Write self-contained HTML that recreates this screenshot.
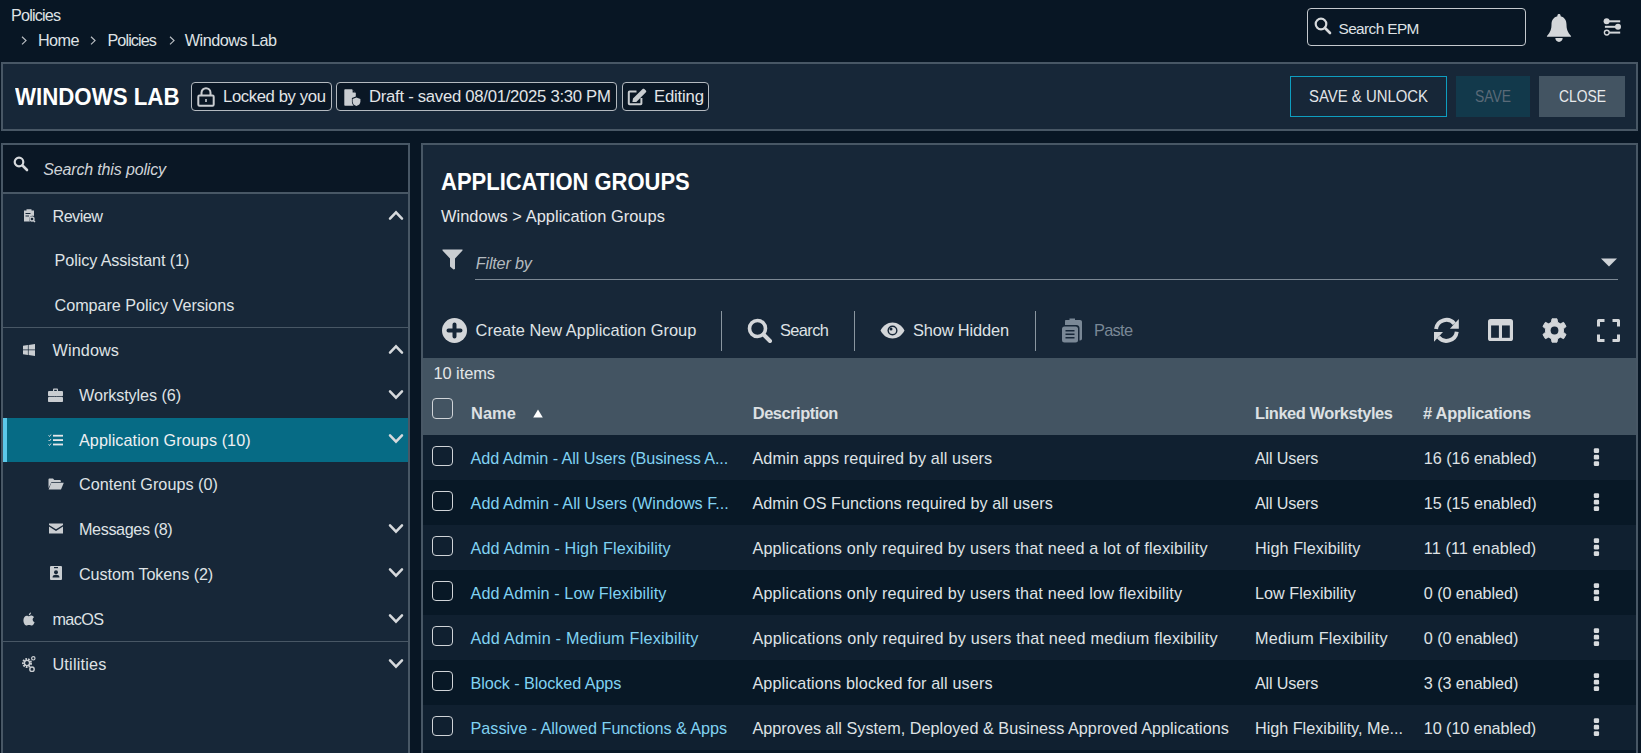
<!DOCTYPE html>
<html><head><meta charset="utf-8"><style>
html,body{margin:0;padding:0;}
body{width:1641px;height:753px;overflow:hidden;background:#081624;position:relative;font-family:"Liberation Sans",sans-serif;}
.a{position:absolute;box-sizing:content-box;}
.t{position:absolute;white-space:nowrap;}
svg.a{overflow:visible}
</style></head><body>
<div class="t" style="left:11.00px;top:7.29px;font-size:16.2px;line-height:16.2px;color:#dfe2e5;font-weight:400;font-style:normal;letter-spacing:-0.829px;">Policies</div>
<svg class="a" style="left:20.5px;top:36px" width="7" height="10" viewBox="0 0 7 10"><path d="M1 0.8 L5 4.6 L1 8.4" fill="none" stroke="#b9bec3" stroke-width="1.2"/></svg>
<div class="t" style="left:38.00px;top:32.09px;font-size:16.2px;line-height:16.2px;color:#dfe2e5;font-weight:400;font-style:normal;letter-spacing:-0.567px;">Home</div>
<svg class="a" style="left:89.5px;top:36px" width="7" height="10" viewBox="0 0 7 10"><path d="M1 0.8 L5 4.6 L1 8.4" fill="none" stroke="#b9bec3" stroke-width="1.2"/></svg>
<div class="t" style="left:107.40px;top:32.09px;font-size:16.2px;line-height:16.2px;color:#dfe2e5;font-weight:400;font-style:normal;letter-spacing:-0.886px;">Policies</div>
<svg class="a" style="left:168.5px;top:36px" width="7" height="10" viewBox="0 0 7 10"><path d="M1 0.8 L5 4.6 L1 8.4" fill="none" stroke="#b9bec3" stroke-width="1.2"/></svg>
<div class="t" style="left:184.80px;top:32.09px;font-size:16.2px;line-height:16.2px;color:#dfe2e5;font-weight:400;font-style:normal;letter-spacing:-0.490px;">Windows Lab</div>
<div class="a" style="left:1307px;top:8px;width:217px;height:36px;border:1px solid #c4c9ce;border-radius:4px;background:#081624"></div>
<svg class="a" style="left:1314px;top:17px" width="18" height="18" viewBox="0 0 18 18"><circle cx="7" cy="7" r="5.3" fill="none" stroke="#d6d9dc" stroke-width="2.2"/><path d="M11 11 L16 16" stroke="#d6d9dc" stroke-width="2.6" stroke-linecap="round"/></svg>
<div class="t" style="left:1338.50px;top:21.06px;font-size:15.4px;line-height:15.4px;color:#dfe2e5;font-weight:400;font-style:normal;letter-spacing:-0.611px;">Search EPM</div>
<svg class="a" style="left:1546px;top:13px" width="26" height="30" viewBox="0 0 26 30"><path d="M13 1 C14 1 14.6 1.7 14.6 2.5 L14.6 3.3 C18.5 4.2 20.5 7.5 20.5 11.5 C20.5 16 21.5 19 25 23 C25.3 23.4 25 23.8 24.5 23.8 L1.5 23.8 C1 23.8 0.7 23.4 1 23 C4.5 19 5.5 16 5.5 11.5 C5.5 7.5 7.5 4.2 11.4 3.3 L11.4 2.5 C11.4 1.7 12 1 13 1Z" fill="#d3d6d9"/><path d="M9.3 25 L16.7 25 C16.7 27.3 15 28.9 13 28.9 C11 28.9 9.3 27.3 9.3 25Z" fill="#d3d6d9"/></svg>
<svg class="a" style="left:1602px;top:17px" width="20" height="19" viewBox="0 0 20 19"><circle cx="4.6" cy="4.3" r="3" fill="#d3d6d9"/><rect x="4.6" y="3.3" width="13.6" height="2" fill="#d3d6d9"/><circle cx="16" cy="9.8" r="3" fill="#d3d6d9"/><rect x="2.9" y="8.8" width="13" height="2" fill="#d3d6d9"/><circle cx="4.8" cy="15.6" r="2.4" fill="none" stroke="#d3d6d9" stroke-width="1.4"/><rect x="7.2" y="14.6" width="11" height="2" fill="#d3d6d9"/></svg>
<div class="a" style="left:1px;top:62px;width:1633px;height:65px;border:2px solid #485765;background:#172738"></div>
<div class="t" style="left:14.50px;top:84.37px;font-size:24px;line-height:24px;color:#ffffff;font-weight:700;font-style:normal;letter-spacing:0.000px;transform-origin:0 0;transform:scale(0.9278,1.03);">WINDOWS LAB</div>
<div class="a" style="left:191px;top:82px;width:139px;height:27px;border:1px solid #b4bac0;border-radius:4px;background:#0a1725"></div><svg class="a" style="left:197px;top:87px" width="18" height="20" viewBox="0 0 18 20"><path d="M4.5 8.5 L4.5 5.8 C4.5 3.2 6.5 1.2 9 1.2 C11.5 1.2 13.5 3.2 13.5 5.8 L13.5 8.5" fill="none" stroke="#c9cdd1" stroke-width="2"/><rect x="1.3" y="8.6" width="15.4" height="10.2" rx="1.2" fill="none" stroke="#c9cdd1" stroke-width="2"/><rect x="8.2" y="12" width="1.6" height="3" fill="#c9cdd1"/></svg><div class="t" style="left:223.00px;top:89.16px;font-size:16.7px;line-height:16.7px;color:#e2e5e8;font-weight:400;font-style:normal;letter-spacing:-0.392px;">Locked by you</div>
<div class="a" style="left:336px;top:82px;width:279px;height:27px;border:1px solid #b4bac0;border-radius:4px;background:#0a1725"></div><svg class="a" style="left:344px;top:89px" width="17" height="17" viewBox="0 0 17 17"><path d="M0.3 1.2 C0.3 0.6 0.7 0.2 1.3 0.2 L8 0.2 L11.8 4 L11.8 7.6 L7.9 9.1 L7.9 12.6 C7.9 14.3 8.6 15.7 9.6 16.7 L1.3 16.7 C0.7 16.7 0.3 16.3 0.3 15.7 Z" fill="#c9cdd1"/><path d="M8.6 0.6 L11.4 3.4 L8.6 3.4 Z" fill="#0a1725"/><path d="M12.4 8.4 L16.4 9.9 L16.4 12.4 C16.4 14.7 14.7 16.3 12.4 16.9 C10.1 16.3 8.6 14.7 8.6 12.4 L8.6 9.9 Z" fill="#c9cdd1"/></svg><div class="t" style="left:369.00px;top:89.16px;font-size:16.7px;line-height:16.7px;color:#e2e5e8;font-weight:400;font-style:normal;letter-spacing:-0.277px;">Draft - saved 08/01/2025 3:30 PM</div>
<div class="a" style="left:622px;top:82px;width:85px;height:27px;border:1px solid #b4bac0;border-radius:4px;background:#0a1725"></div><svg class="a" style="left:627px;top:88px" width="20" height="18" viewBox="0 0 20 18"><path d="M9.5 3.6 L2.6 3.6 C2.1 3.6 1.8 3.9 1.8 4.4 L1.8 15.4 C1.8 15.9 2.1 16.2 2.6 16.2 L13.6 16.2 C14.1 16.2 14.4 15.9 14.4 15.4 L14.4 10" fill="none" stroke="#c9cdd1" stroke-width="2"/><path d="M5.4 14 L6 10.6 L15.6 1 C16.1 0.5 16.8 0.5 17.3 1 L18.9 2.6 C19.4 3.1 19.4 3.8 18.9 4.3 L9.3 13.9 Z" fill="#c9cdd1"/></svg><div class="t" style="left:654.00px;top:89.16px;font-size:16.7px;line-height:16.7px;color:#e2e5e8;font-weight:400;font-style:normal;letter-spacing:-0.183px;">Editing</div>
<div class="a" style="left:1290px;top:76px;width:155px;height:39px;border:1px solid #0e9ec0;"></div>
<div class="t" style="left:1309.00px;top:87.61px;font-size:17px;line-height:17px;color:#e2e5e8;font-weight:400;font-style:normal;letter-spacing:0.000px;transform-origin:0 0;transform:scale(0.8769,1.0);">SAVE &amp; UNLOCK</div>
<div class="a" style="left:1456px;top:76px;width:74px;height:41px;background:#12394b"></div>
<div class="t" style="left:1475.00px;top:87.61px;font-size:17px;line-height:17px;color:#5a6a78;font-weight:400;font-style:normal;letter-spacing:0.000px;transform-origin:0 0;transform:scale(0.8163,1.0);">SAVE</div>
<div class="a" style="left:1539px;top:76px;width:86px;height:41px;background:#435462"></div>
<div class="t" style="left:1558.60px;top:87.61px;font-size:17px;line-height:17px;color:#e8eaec;font-weight:400;font-style:normal;letter-spacing:0.000px;transform-origin:0 0;transform:scale(0.8142,1.0);">CLOSE</div>
<div class="a" style="left:1px;top:143px;width:405px;height:700px;border:2px solid #485765;background:#172738"></div>
<div class="a" style="left:3px;top:145px;width:405px;height:47px;background:#0a1725;border-bottom:2px solid #485765"></div>
<svg class="a" style="left:13px;top:156px" width="16" height="16" viewBox="0 0 16 16"><circle cx="6" cy="6" r="4.3" fill="none" stroke="#d6d9dc" stroke-width="2.2"/><path d="M9.5 9.5 L14 14" stroke="#d6d9dc" stroke-width="2.6" stroke-linecap="round"/></svg>
<div class="t" style="left:43.20px;top:161.66px;font-size:16px;line-height:16px;color:#d0d4d8;font-weight:400;font-style:italic;letter-spacing:-0.147px;">Search this policy</div>
<div class="a" style="left:3px;top:327px;width:405px;height:1px;background:#485765"></div>
<div class="a" style="left:3px;top:641px;width:405px;height:1px;background:#485765"></div>
<div class="a" style="left:3px;top:418px;width:405px;height:44px;background:#066b85"></div>
<div class="a" style="left:3px;top:418px;width:4px;height:44px;background:#5cc8ea"></div>
<svg class="a" style="left:23px;top:208px" width="12" height="15" viewBox="0 0 12 15"><path d="M1 2.5 L3.5 2.5 L3.5 1.3 L8.5 1.3 L8.5 2.5 L11 2.5 L11 8 C9.8 7.6 8 7.8 7 9 C6 10.2 6 12.2 7 13.6 L1 13.6 Z" fill="#c9cdd1"/><circle cx="9" cy="11" r="2" fill="none" stroke="#c9cdd1" stroke-width="1.3"/><path d="M10.4 12.4 L12 14" stroke="#c9cdd1" stroke-width="1.4"/><rect x="2.5" y="5" width="5" height="1" fill="#172738"/><rect x="2.5" y="7.5" width="3.5" height="1" fill="#172738"/></svg>
<div class="t" style="left:52.50px;top:207.79px;font-size:16.2px;line-height:16.2px;color:#dfe2e5;font-weight:400;font-style:normal;letter-spacing:-0.540px;">Review</div>
<svg class="a" style="left:388px;top:210.0px" width="16" height="11" viewBox="0 0 16 11"><path d="M2 8.7 L8 2.3 L14 8.7" fill="none" stroke="#d6d9dc" stroke-width="2.5" stroke-linecap="round"/></svg>

<div class="t" style="left:54.60px;top:252.19px;font-size:16.2px;line-height:16.2px;color:#dfe2e5;font-weight:400;font-style:normal;letter-spacing:-0.105px;">Policy Assistant (1)</div>

<div class="t" style="left:54.60px;top:296.99px;font-size:16.2px;line-height:16.2px;color:#dfe2e5;font-weight:400;font-style:normal;letter-spacing:-0.050px;">Compare Policy Versions</div>
<svg class="a" style="left:23px;top:344px" width="12" height="12" viewBox="0 0 12 12"><path d="M0 1.7 L4.9 1 L4.9 5.6 L0 5.6Z M5.6 0.9 L12 0 L12 5.6 L5.6 5.6Z M0 6.3 L4.9 6.3 L4.9 11 L0 10.3Z M5.6 6.3 L12 6.3 L12 12 L5.6 11.1Z" fill="#c9cdd1"/></svg>
<div class="t" style="left:52.50px;top:341.99px;font-size:16.2px;line-height:16.2px;color:#dfe2e5;font-weight:400;font-style:normal;letter-spacing:0.133px;">Windows</div>
<svg class="a" style="left:388px;top:344.2px" width="16" height="11" viewBox="0 0 16 11"><path d="M2 8.7 L8 2.3 L14 8.7" fill="none" stroke="#d6d9dc" stroke-width="2.5" stroke-linecap="round"/></svg>
<svg class="a" style="left:48px;top:388px" width="15" height="14" viewBox="0 0 15 14"><path d="M5 3 L5 1.6 C5 1 5.5 0.5 6 0.5 L9 0.5 C9.5 0.5 10 1 10 1.6 L10 3 L8.8 3 L8.8 1.8 L6.2 1.8 L6.2 3 Z" fill="#c9cdd1"/><rect x="0" y="3" width="15" height="5.2" rx="1" fill="#c9cdd1"/><rect x="0" y="9" width="15" height="5" rx="0.8" fill="#c9cdd1"/><rect x="6" y="7.2" width="3" height="2.6" fill="#c9cdd1"/><rect x="6.2" y="8.2" width="2.6" height="0.8" fill="#172738"/></svg>
<div class="t" style="left:79.10px;top:387.29px;font-size:16.2px;line-height:16.2px;color:#dfe2e5;font-weight:400;font-style:normal;letter-spacing:-0.092px;">Workstyles (6)</div>
<svg class="a" style="left:388px;top:389px" width="16" height="11" viewBox="0 0 16 11"><path d="M2 2.3 L8 8.7 L14 2.3" fill="none" stroke="#d6d9dc" stroke-width="2.5" stroke-linecap="round"/></svg>
<svg class="a" style="left:48px;top:434px" width="15" height="12" viewBox="0 0 15 12"><path d="M0.5 1.5 L1.5 2.5 L3 0.5 M0.5 6 L1.5 7 L3 5 M0.5 10.5 L1.5 11.5 L3 9.5" fill="none" stroke="#d6d9dc" stroke-width="1"/><rect x="5" y="0.8" width="10" height="1.8" fill="#e6e8ea"/><rect x="5" y="5.2" width="10" height="1.8" fill="#e6e8ea"/><rect x="5" y="9.6" width="10" height="1.8" fill="#e6e8ea"/></svg>
<div class="t" style="left:79.00px;top:431.69px;font-size:16.2px;line-height:16.2px;color:#eef0f2;font-weight:400;font-style:normal;letter-spacing:0.073px;">Application Groups (10)</div>
<svg class="a" style="left:388px;top:433.4px" width="16" height="11" viewBox="0 0 16 11"><path d="M2 2.3 L8 8.7 L14 2.3" fill="none" stroke="#d6d9dc" stroke-width="2.5" stroke-linecap="round"/></svg>
<svg class="a" style="left:48px;top:478px" width="16" height="12" viewBox="0 0 16 12"><path d="M0.5 10 L0.5 1.3 C0.5 0.8 0.9 0.5 1.3 0.5 L5 0.5 L6.3 2 L12 2 C12.4 2 12.8 2.4 12.8 2.8 L12.8 4 L3.5 4 Z" fill="#c9cdd1"/><path d="M3.3 4.8 L15.8 4.8 L13 11.5 L0.6 11.5 Z" fill="#c9cdd1"/></svg>
<div class="t" style="left:79.00px;top:476.29px;font-size:16.2px;line-height:16.2px;color:#dfe2e5;font-weight:400;font-style:normal;letter-spacing:0.018px;">Content Groups (0)</div>
<svg class="a" style="left:49px;top:523px" width="14" height="11" viewBox="0 0 14 11"><path d="M0 0.5 L14 0.5 L14 2 L7 6.3 L0 2Z" fill="#c9cdd1"/><path d="M0 3.6 L7 8 L14 3.6 L14 10.5 L0 10.5Z" fill="#c9cdd1"/></svg>
<div class="t" style="left:79.00px;top:521.39px;font-size:16.2px;line-height:16.2px;color:#dfe2e5;font-weight:400;font-style:normal;letter-spacing:-0.391px;">Messages (8)</div>
<svg class="a" style="left:388px;top:523.1px" width="16" height="11" viewBox="0 0 16 11"><path d="M2 2.3 L8 8.7 L14 2.3" fill="none" stroke="#d6d9dc" stroke-width="2.5" stroke-linecap="round"/></svg>
<svg class="a" style="left:50px;top:566px" width="12" height="14" viewBox="0 0 12 14"><rect x="0" y="0" width="12" height="14" rx="1" fill="#c9cdd1"/><rect x="4" y="1" width="4" height="1.2" fill="#172738"/><circle cx="6" cy="6.3" r="2" fill="#172738"/><path d="M2.5 11.5 C2.5 9.5 4 8.8 6 8.8 C8 8.8 9.5 9.5 9.5 11.5Z" fill="#172738"/></svg>
<div class="t" style="left:79.00px;top:565.69px;font-size:16.2px;line-height:16.2px;color:#dfe2e5;font-weight:400;font-style:normal;letter-spacing:-0.081px;">Custom Tokens (2)</div>
<svg class="a" style="left:388px;top:567.4px" width="16" height="11" viewBox="0 0 16 11"><path d="M2 2.3 L8 8.7 L14 2.3" fill="none" stroke="#d6d9dc" stroke-width="2.5" stroke-linecap="round"/></svg>
<svg class="a" style="left:23px;top:612px" width="12" height="14" viewBox="0 0 12 14"><path d="M8 0.5 C8 1.8 7.2 3 5.8 3.2 C5.8 1.9 6.6 0.8 8 0.5Z" fill="#c9cdd1"/><path d="M6 4.3 C7 3.6 8.2 3.4 9.2 3.8 C10 4.1 10.6 4.6 11 5.3 C9.6 6.1 9.2 7.9 10.2 9.2 C10.6 9.7 11 10 11.6 10.2 C11.1 11.6 10 13.5 8.8 13.5 C7.8 13.5 7.4 12.9 6 12.9 C4.6 12.9 4.2 13.5 3.2 13.5 C1.8 13.5 0.4 11 0.4 8.3 C0.4 5.5 2.1 3.7 3.8 3.7 C4.8 3.7 5.3 4.3 6 4.3Z" fill="#c9cdd1"/></svg>
<div class="t" style="left:52.40px;top:611.09px;font-size:16.2px;line-height:16.2px;color:#dfe2e5;font-weight:400;font-style:normal;letter-spacing:-0.600px;">macOS</div>
<svg class="a" style="left:388px;top:612.8px" width="16" height="11" viewBox="0 0 16 11"><path d="M2 2.3 L8 8.7 L14 2.3" fill="none" stroke="#d6d9dc" stroke-width="2.5" stroke-linecap="round"/></svg>
<svg class="a" style="left:21px;top:656px" width="15" height="16" viewBox="0 0 15 16"><circle cx="6" cy="7" r="3.6" fill="none" stroke="#c9cdd1" stroke-width="2.8" stroke-dasharray="1.6 0.9"/><circle cx="6" cy="7" r="2.6" fill="none" stroke="#c9cdd1" stroke-width="1.4"/><circle cx="12.3" cy="2.3" r="1.7" fill="none" stroke="#c9cdd1" stroke-width="1.2"/><circle cx="11" cy="13.2" r="2.2" fill="none" stroke="#c9cdd1" stroke-width="1.4"/></svg>
<div class="t" style="left:52.40px;top:656.09px;font-size:16.2px;line-height:16.2px;color:#dfe2e5;font-weight:400;font-style:normal;letter-spacing:0.237px;">Utilities</div>
<svg class="a" style="left:388px;top:657.8px" width="16" height="11" viewBox="0 0 16 11"><path d="M2 2.3 L8 8.7 L14 2.3" fill="none" stroke="#d6d9dc" stroke-width="2.5" stroke-linecap="round"/></svg>
<div class="a" style="left:421px;top:143px;width:1213px;height:700px;border:2px solid #485765;background:#172738"></div>
<div class="t" style="left:441.20px;top:169.47px;font-size:24px;line-height:24px;color:#ffffff;font-weight:700;font-style:normal;letter-spacing:0.000px;transform-origin:0 0;transform:scale(0.9161,1.03);">APPLICATION GROUPS</div>
<div class="t" style="left:441.00px;top:207.82px;font-size:16.4px;line-height:16.4px;color:#e6e8ea;font-weight:400;font-style:normal;letter-spacing:0.041px;">Windows &gt; Application Groups</div>
<svg class="a" style="left:442px;top:249px" width="21" height="21" viewBox="0 0 21 21"><path d="M0.5 0.5 L20.5 0.5 L20.5 1.5 L13 9.5 L13 20 L11.5 20.5 L8 17.5 L8 9.5 L0.5 1.5Z" fill="#c9cdd1"/></svg>
<div class="t" style="left:475.80px;top:255.49px;font-size:16.2px;line-height:16.2px;color:#b4babf;font-weight:400;font-style:italic;letter-spacing:-0.188px;">Filter by</div>
<div class="a" style="left:475px;top:279px;width:1143px;height:1px;background:#7c8894"></div>
<svg class="a" style="left:1601px;top:257.6px" width="16" height="9" viewBox="0 0 16 9"><path d="M0 0.5 L16 0.5 L8 8.6Z" fill="#cfd3d7"/></svg>
<svg class="a" style="left:442px;top:318px" width="25" height="25" viewBox="0 0 25 25"><circle cx="12.5" cy="12.5" r="12.5" fill="#d3d6d9"/><path d="M12.5 6.5 L12.5 18.5 M6.5 12.5 L18.5 12.5" stroke="#172738" stroke-width="4" stroke-linecap="round"/></svg>
<div class="t" style="left:475.60px;top:321.72px;font-size:16.4px;line-height:16.4px;color:#dfe2e5;font-weight:400;font-style:normal;letter-spacing:0.007px;">Create New Application Group</div>
<div class="a" style="left:721px;top:311px;width:1px;height:40px;background:#8a96a0"></div>
<svg class="a" style="left:747px;top:318px" width="25" height="25" viewBox="0 0 25 25"><circle cx="10.5" cy="10.5" r="8" fill="none" stroke="#d3d6d9" stroke-width="3.6"/><path d="M16.5 16.5 L23 23" stroke="#d3d6d9" stroke-width="4" stroke-linecap="round"/></svg>
<div class="t" style="left:780.00px;top:321.72px;font-size:16.4px;line-height:16.4px;color:#dfe2e5;font-weight:400;font-style:normal;letter-spacing:-0.600px;">Search</div>
<div class="a" style="left:854px;top:311px;width:1px;height:40px;background:#8a96a0"></div>
<svg class="a" style="left:880px;top:322px" width="25" height="17" viewBox="0 0 25 17"><path d="M0.5 8.5 C3 3.5 7.5 0.5 12.5 0.5 C17.5 0.5 22 3.5 24.5 8.5 C22 13.5 17.5 16.5 12.5 16.5 C7.5 16.5 3 13.5 0.5 8.5Z" fill="#d3d6d9"/><circle cx="12.5" cy="8.5" r="5" fill="#172738"/><circle cx="12.5" cy="8.5" r="3.6" fill="#d3d6d9"/><circle cx="11" cy="7" r="1.5" fill="#172738"/></svg>
<div class="t" style="left:913.00px;top:321.72px;font-size:16.4px;line-height:16.4px;color:#dfe2e5;font-weight:400;font-style:normal;letter-spacing:-0.150px;">Show Hidden</div>
<div class="a" style="left:1035px;top:311px;width:1px;height:40px;background:#8a96a0"></div>
<svg class="a" style="left:1062px;top:318px" width="21" height="25" viewBox="0 0 21 25"><path d="M3 2 L7.5 2 L7.5 0.5 L13 0.5 L13 2 L18 2 C19.3 2 20 2.7 20 4 L20 20.5 C20 21.8 19.3 22.5 18 22.5 L17.5 22.5 L17.5 10 C17.5 8 16 7 14.5 7 L3 7 L3 4 C3 2.7 3.7 2 3 2Z" fill="#7a8896"/><rect x="0" y="8.5" width="16" height="16" rx="2.5" fill="#7a8896"/><rect x="3.5" y="12" width="9" height="1.5" fill="#172738"/><rect x="3.5" y="15.5" width="9" height="1.5" fill="#172738"/><rect x="3.5" y="19" width="9" height="1.5" fill="#172738"/></svg>
<div class="t" style="left:1094.00px;top:321.72px;font-size:16.4px;line-height:16.4px;color:#7a8896;font-weight:400;font-style:normal;letter-spacing:-0.725px;">Paste</div>
<svg class="a" style="left:1434px;top:318px" width="26" height="26" viewBox="0 0 26 26"><path d="M2.05 11 A10.4 10.4 0 0 1 20.4 5.7" fill="none" stroke="#d3d6d9" stroke-width="3.9"/><path d="M24.8 1 L24.8 10.8 L15.9 10.8Z" fill="#d3d6d9"/><path d="M22.75 13.8 A10.4 10.4 0 0 1 4.4 19.1" fill="none" stroke="#d3d6d9" stroke-width="3.9"/><path d="M0 13.9 L9 13.9 L0 23.7Z" fill="#d3d6d9"/></svg>
<svg class="a" style="left:1488px;top:319px" width="25" height="22" viewBox="0 0 25 22"><rect x="0" y="0" width="25" height="22" rx="2.6" fill="#d3d6d9"/><rect x="3.1" y="6.45" width="7.8" height="12.35" fill="#172738"/><rect x="14" y="6.45" width="7.8" height="12.35" fill="#172738"/></svg>
<svg class="a" style="left:1541.5px;top:317.9px" width="25" height="25" viewBox="0 0 25 25"><g transform="translate(12.5 12.5) scale(0.95)"><path d="M-2.6 -12.3 L2.6 -12.3 L3.3 -8.6 L6.2 -7 L9.6 -8.6 L12.2 -4.2 L9.4 -1.8 L9.4 1.8 L12.2 4.2 L9.6 8.6 L6.2 7 L3.3 8.6 L2.6 12.3 L-2.6 12.3 L-3.3 8.6 L-6.2 7 L-9.6 8.6 L-12.2 4.2 L-9.4 1.8 L-9.4 -1.8 L-12.2 -4.2 L-9.6 -8.6 L-6.2 -7 L-3.3 -8.6Z" fill="#d3d6d9" stroke="#d3d6d9" stroke-width="1" stroke-linejoin="round"/><circle r="4.1" fill="#172738"/></g></svg>
<svg class="a" style="left:1597px;top:319px" width="23" height="23" viewBox="0 0 23 23"><path d="M1.5 7.5 L1.5 1.5 L7.5 1.5 M15.5 1.5 L21.5 1.5 L21.5 7.5 M21.5 15.5 L21.5 21.5 L15.5 21.5 M7.5 21.5 L1.5 21.5 L1.5 15.5" fill="none" stroke="#d3d6d9" stroke-width="3" stroke-linejoin="round"/></svg>
<div class="a" style="left:423px;top:358px;width:1213px;height:77px;background:#435462"></div>
<div class="t" style="left:433.50px;top:365.02px;font-size:16.4px;line-height:16.4px;color:#e3e6e8;font-weight:400;font-style:normal;letter-spacing:-0.071px;">10 items</div>
<div class="a" style="left:432px;top:398px;width:19.2px;height:19.2px;border:1.5px solid #d0d4d8;border-radius:4px;box-sizing:content-box"></div>
<div class="t" style="left:471.00px;top:405.22px;font-size:16.4px;line-height:16.4px;color:#dde0e3;font-weight:700;font-style:normal;letter-spacing:0.067px;">Name</div>
<svg class="a" style="left:533px;top:409px" width="10" height="9" viewBox="0 0 10 9"><path d="M5 0.5 L9.8 8.5 L0.2 8.5Z" fill="#ffffff"/></svg>
<div class="t" style="left:752.80px;top:405.02px;font-size:16.4px;line-height:16.4px;color:#dde0e3;font-weight:700;font-style:normal;letter-spacing:-0.460px;">Description</div>
<div class="t" style="left:1255.10px;top:405.02px;font-size:16.4px;line-height:16.4px;color:#dde0e3;font-weight:700;font-style:normal;letter-spacing:-0.419px;">Linked Workstyles</div>
<div class="t" style="left:1423.00px;top:405.02px;font-size:16.4px;line-height:16.4px;color:#dde0e3;font-weight:700;font-style:normal;letter-spacing:-0.254px;"># Applications</div>
<div class="a" style="left:423px;top:435px;width:1213px;height:45px;background:#102030"></div>
<div class="a" style="left:432px;top:446px;width:19.2px;height:18.2px;border:1.5px solid #d0d4d8;border-radius:4px;box-sizing:content-box"></div>
<div class="t" style="left:470.60px;top:450.19px;font-size:16.2px;line-height:16.2px;color:#80d2f2;font-weight:400;font-style:normal;letter-spacing:-0.066px;">Add Admin - All Users (Business A...</div>
<div class="t" style="left:752.40px;top:450.19px;font-size:16.2px;line-height:16.2px;color:#dfe2e5;font-weight:400;font-style:normal;letter-spacing:0.129px;">Admin apps required by all users</div>
<div class="t" style="left:1255.00px;top:450.19px;font-size:16.2px;line-height:16.2px;color:#dfe2e5;font-weight:400;font-style:normal;letter-spacing:-0.188px;">All Users</div>
<div class="t" style="left:1423.80px;top:450.19px;font-size:16.2px;line-height:16.2px;color:#dfe2e5;font-weight:400;font-style:normal;letter-spacing:-0.036px;">16 (16 enabled)</div>
<svg class="a" style="left:1592px;top:448px" width="8" height="20" viewBox="0 0 8 20"><rect x="1.8" y="0.3" width="5.3" height="4.8" rx="1.3" fill="#d8dbde"/><rect x="1.8" y="6.8" width="5.3" height="4.8" rx="1.3" fill="#d8dbde"/><rect x="1.8" y="13.3" width="5.3" height="4.8" rx="1.3" fill="#d8dbde"/></svg>
<div class="a" style="left:423px;top:480px;width:1213px;height:45px;background:#081826"></div>
<div class="a" style="left:432px;top:491px;width:19.2px;height:18.2px;border:1.5px solid #d0d4d8;border-radius:4px;box-sizing:content-box"></div>
<div class="t" style="left:470.60px;top:495.19px;font-size:16.2px;line-height:16.2px;color:#80d2f2;font-weight:400;font-style:normal;letter-spacing:0.000px;">Add Admin - All Users (Windows F...</div>
<div class="t" style="left:752.40px;top:495.19px;font-size:16.2px;line-height:16.2px;color:#dfe2e5;font-weight:400;font-style:normal;letter-spacing:0.044px;">Admin OS Functions required by all users</div>
<div class="t" style="left:1255.00px;top:495.19px;font-size:16.2px;line-height:16.2px;color:#dfe2e5;font-weight:400;font-style:normal;letter-spacing:-0.188px;">All Users</div>
<div class="t" style="left:1423.80px;top:495.19px;font-size:16.2px;line-height:16.2px;color:#dfe2e5;font-weight:400;font-style:normal;letter-spacing:-0.036px;">15 (15 enabled)</div>
<svg class="a" style="left:1592px;top:493px" width="8" height="20" viewBox="0 0 8 20"><rect x="1.8" y="0.3" width="5.3" height="4.8" rx="1.3" fill="#d8dbde"/><rect x="1.8" y="6.8" width="5.3" height="4.8" rx="1.3" fill="#d8dbde"/><rect x="1.8" y="13.3" width="5.3" height="4.8" rx="1.3" fill="#d8dbde"/></svg>
<div class="a" style="left:423px;top:525px;width:1213px;height:45px;background:#102030"></div>
<div class="a" style="left:432px;top:536px;width:19.2px;height:18.2px;border:1.5px solid #d0d4d8;border-radius:4px;box-sizing:content-box"></div>
<div class="t" style="left:470.60px;top:540.19px;font-size:16.2px;line-height:16.2px;color:#80d2f2;font-weight:400;font-style:normal;letter-spacing:0.111px;">Add Admin - High Flexibility</div>
<div class="t" style="left:752.40px;top:540.19px;font-size:16.2px;line-height:16.2px;color:#dfe2e5;font-weight:400;font-style:normal;letter-spacing:0.205px;">Applications only required by users that need a lot of flexibility</div>
<div class="t" style="left:1255.00px;top:540.19px;font-size:16.2px;line-height:16.2px;color:#dfe2e5;font-weight:400;font-style:normal;letter-spacing:0.073px;">High Flexibility</div>
<div class="t" style="left:1423.80px;top:540.19px;font-size:16.2px;line-height:16.2px;color:#dfe2e5;font-weight:400;font-style:normal;letter-spacing:0.100px;">11 (11 enabled)</div>
<svg class="a" style="left:1592px;top:538px" width="8" height="20" viewBox="0 0 8 20"><rect x="1.8" y="0.3" width="5.3" height="4.8" rx="1.3" fill="#d8dbde"/><rect x="1.8" y="6.8" width="5.3" height="4.8" rx="1.3" fill="#d8dbde"/><rect x="1.8" y="13.3" width="5.3" height="4.8" rx="1.3" fill="#d8dbde"/></svg>
<div class="a" style="left:423px;top:570px;width:1213px;height:45px;background:#081826"></div>
<div class="a" style="left:432px;top:581px;width:19.2px;height:18.2px;border:1.5px solid #d0d4d8;border-radius:4px;box-sizing:content-box"></div>
<div class="t" style="left:470.60px;top:585.19px;font-size:16.2px;line-height:16.2px;color:#80d2f2;font-weight:400;font-style:normal;letter-spacing:0.088px;">Add Admin - Low Flexibility</div>
<div class="t" style="left:752.40px;top:585.19px;font-size:16.2px;line-height:16.2px;color:#dfe2e5;font-weight:400;font-style:normal;letter-spacing:0.203px;">Applications only required by users that need low flexibility</div>
<div class="t" style="left:1255.00px;top:585.19px;font-size:16.2px;line-height:16.2px;color:#dfe2e5;font-weight:400;font-style:normal;letter-spacing:0.014px;">Low Flexibility</div>
<div class="t" style="left:1423.80px;top:585.19px;font-size:16.2px;line-height:16.2px;color:#dfe2e5;font-weight:400;font-style:normal;letter-spacing:-0.075px;">0 (0 enabled)</div>
<svg class="a" style="left:1592px;top:583px" width="8" height="20" viewBox="0 0 8 20"><rect x="1.8" y="0.3" width="5.3" height="4.8" rx="1.3" fill="#d8dbde"/><rect x="1.8" y="6.8" width="5.3" height="4.8" rx="1.3" fill="#d8dbde"/><rect x="1.8" y="13.3" width="5.3" height="4.8" rx="1.3" fill="#d8dbde"/></svg>
<div class="a" style="left:423px;top:615px;width:1213px;height:45px;background:#102030"></div>
<div class="a" style="left:432px;top:626px;width:19.2px;height:18.2px;border:1.5px solid #d0d4d8;border-radius:4px;box-sizing:content-box"></div>
<div class="t" style="left:470.60px;top:630.19px;font-size:16.2px;line-height:16.2px;color:#80d2f2;font-weight:400;font-style:normal;letter-spacing:0.221px;">Add Admin - Medium Flexibility</div>
<div class="t" style="left:752.40px;top:630.19px;font-size:16.2px;line-height:16.2px;color:#dfe2e5;font-weight:400;font-style:normal;letter-spacing:0.230px;">Applications only required by users that need medium flexibility</div>
<div class="t" style="left:1255.00px;top:630.19px;font-size:16.2px;line-height:16.2px;color:#dfe2e5;font-weight:400;font-style:normal;letter-spacing:0.229px;">Medium Flexibility</div>
<div class="t" style="left:1423.80px;top:630.19px;font-size:16.2px;line-height:16.2px;color:#dfe2e5;font-weight:400;font-style:normal;letter-spacing:-0.075px;">0 (0 enabled)</div>
<svg class="a" style="left:1592px;top:628px" width="8" height="20" viewBox="0 0 8 20"><rect x="1.8" y="0.3" width="5.3" height="4.8" rx="1.3" fill="#d8dbde"/><rect x="1.8" y="6.8" width="5.3" height="4.8" rx="1.3" fill="#d8dbde"/><rect x="1.8" y="13.3" width="5.3" height="4.8" rx="1.3" fill="#d8dbde"/></svg>
<div class="a" style="left:423px;top:660px;width:1213px;height:45px;background:#081826"></div>
<div class="a" style="left:432px;top:671px;width:19.2px;height:18.2px;border:1.5px solid #d0d4d8;border-radius:4px;box-sizing:content-box"></div>
<div class="t" style="left:470.60px;top:675.19px;font-size:16.2px;line-height:16.2px;color:#80d2f2;font-weight:400;font-style:normal;letter-spacing:-0.068px;">Block - Blocked Apps</div>
<div class="t" style="left:752.40px;top:675.19px;font-size:16.2px;line-height:16.2px;color:#dfe2e5;font-weight:400;font-style:normal;letter-spacing:0.133px;">Applications blocked for all users</div>
<div class="t" style="left:1255.00px;top:675.19px;font-size:16.2px;line-height:16.2px;color:#dfe2e5;font-weight:400;font-style:normal;letter-spacing:-0.175px;">All Users</div>
<div class="t" style="left:1423.80px;top:675.19px;font-size:16.2px;line-height:16.2px;color:#dfe2e5;font-weight:400;font-style:normal;letter-spacing:-0.075px;">3 (3 enabled)</div>
<svg class="a" style="left:1592px;top:673px" width="8" height="20" viewBox="0 0 8 20"><rect x="1.8" y="0.3" width="5.3" height="4.8" rx="1.3" fill="#d8dbde"/><rect x="1.8" y="6.8" width="5.3" height="4.8" rx="1.3" fill="#d8dbde"/><rect x="1.8" y="13.3" width="5.3" height="4.8" rx="1.3" fill="#d8dbde"/></svg>
<div class="a" style="left:423px;top:705px;width:1213px;height:45px;background:#102030"></div>
<div class="a" style="left:432px;top:716px;width:19.2px;height:18.2px;border:1.5px solid #d0d4d8;border-radius:4px;box-sizing:content-box"></div>
<div class="t" style="left:470.60px;top:720.19px;font-size:16.2px;line-height:16.2px;color:#80d2f2;font-weight:400;font-style:normal;letter-spacing:-0.024px;">Passive - Allowed Functions &amp; Apps</div>
<div class="t" style="left:752.40px;top:720.19px;font-size:16.2px;line-height:16.2px;color:#dfe2e5;font-weight:400;font-style:normal;letter-spacing:0.038px;">Approves all System, Deployed &amp; Business Approved Applications</div>
<div class="t" style="left:1255.00px;top:720.19px;font-size:16.2px;line-height:16.2px;color:#dfe2e5;font-weight:400;font-style:normal;letter-spacing:-0.009px;">High Flexibility, Me...</div>
<div class="t" style="left:1423.80px;top:720.19px;font-size:16.2px;line-height:16.2px;color:#dfe2e5;font-weight:400;font-style:normal;letter-spacing:-0.071px;">10 (10 enabled)</div>
<svg class="a" style="left:1592px;top:718px" width="8" height="20" viewBox="0 0 8 20"><rect x="1.8" y="0.3" width="5.3" height="4.8" rx="1.3" fill="#d8dbde"/><rect x="1.8" y="6.8" width="5.3" height="4.8" rx="1.3" fill="#d8dbde"/><rect x="1.8" y="13.3" width="5.3" height="4.8" rx="1.3" fill="#d8dbde"/></svg>
<div class="a" style="left:423px;top:750px;width:1213px;height:45px;background:#081826"></div>
</body></html>
